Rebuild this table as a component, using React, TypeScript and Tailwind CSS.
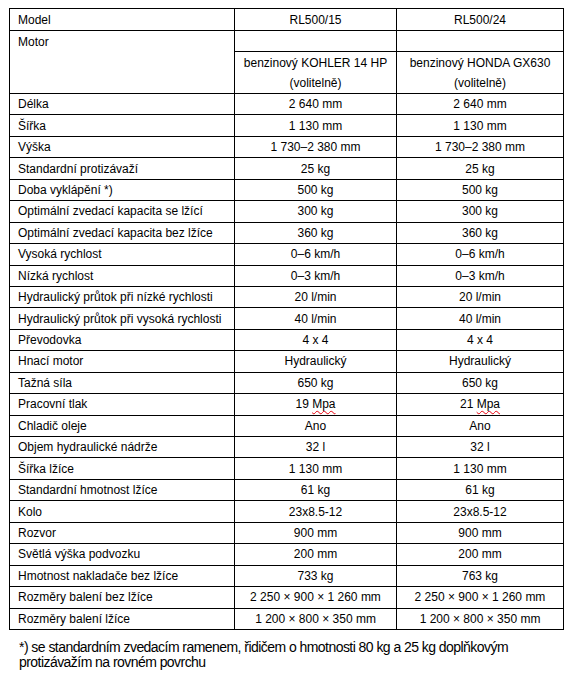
import React from "react";

type Row = [string, React.ReactNode, React.ReactNode];

const Mpa = () => (
  <span className="underline decoration-wavy decoration-red-600 decoration-1 underline-offset-2">Mpa</span>
);

const rows: Row[] = [
  ["Délka", "2 640 mm", "2 640 mm"],
  ["Šířka", "1 130 mm", "1 130 mm"],
  ["Výška", "1 730–2 380 mm", "1 730–2 380 mm"],
  ["Standardní protizávaží", "25 kg", "25 kg"],
  ["Doba vyklápění *)", "500 kg", "500 kg"],
  ["Optimální zvedací kapacita se lžící", "300 kg", "300 kg"],
  ["Optimální zvedací kapacita bez lžíce", "360 kg", "360 kg"],
  ["Vysoká rychlost", "0–6 km/h", "0–6 km/h"],
  ["Nízká rychlost", "0–3 km/h", "0–3 km/h"],
  ["Hydraulický průtok při nízké rychlosti", "20 l/min", "20 l/min"],
  ["Hydraulický průtok při vysoká rychlosti", "40 l/min", "40 l/min"],
  ["Převodovka", "4 x 4", "4 x 4"],
  ["Hnací motor", "Hydraulický", "Hydraulický"],
  ["Tažná síla", "650 kg", "650 kg"],
  ["Pracovní tlak", <>19 <Mpa /></>, <>21 <Mpa /></>],
  ["Chladič oleje", "Ano", "Ano"],
  ["Objem hydraulické nádrže", "32 l", "32 l"],
  ["Šířka lžíce", "1 130 mm", "1 130 mm"],
  ["Standardní hmotnost lžíce", "61 kg", "61 kg"],
  ["Kolo", "23x8.5-12", "23x8.5-12"],
  ["Rozvor", "900 mm", "900 mm"],
  ["Světlá výška podvozku", "200 mm", "200 mm"],
  ["Hmotnost nakladače bez lžíce", "733 kg", "763 kg"],
  ["Rozměry balení bez lžíce", "2 250 × 900 × 1 260 mm", "2 250 × 900 × 1 260 mm"],
  ["Rozměry balení lžíce", "1 200 × 800 × 350 mm", "1 200 × 800 × 350 mm"],
];

export default function App() {
  return (
    <div
      className="w-[575px] h-[678px] bg-white text-black"
      style={{ fontFamily: '"Liberation Sans", Arial, sans-serif' }}
    >
      <div className="pt-[8px] pl-[9px]">
        <table className="border-collapse table-fixed w-[554px] text-[12px] leading-[20px]">
          <colgroup>
            <col className="w-[225px]" />
            <col className="w-[162px]" />
            <col className="w-[167px]" />
          </colgroup>
          <tbody>
            <tr className="h-[22px]">
              <td className="border border-black pl-[8px] py-0 align-middle">Model</td>
              <td className="border border-black text-center py-0 align-middle">RL500/15</td>
              <td className="border border-black text-center py-0 align-middle">RL500/24</td>
            </tr>
            <tr className="h-[21px]">
              <td rowSpan={2} className="border border-black pl-[8px] pt-[1px] align-top">Motor</td>
              <td className="border border-black"></td>
              <td className="border border-black"></td>
            </tr>
            <tr className="h-[42px]">
              <td className="border border-black text-center align-middle">
                benzinový KOHLER 14 HP
                <br />
                (volitelně)
              </td>
              <td className="border border-black text-center align-middle">
                benzinový HONDA GX630
                <br />
                (volitelně)
              </td>
            </tr>
            {rows.map(([a, b, c], i) => (
              <tr key={i} className="h-[21.44px]">
                <td className="border border-black pl-[8px] py-0 align-middle whitespace-nowrap">{a}</td>
                <td className="border border-black text-center py-0 align-middle whitespace-nowrap">{b}</td>
                <td className="border border-black text-center py-0 align-middle whitespace-nowrap">{c}</td>
              </tr>
            ))}
          </tbody>
        </table>
      </div>
      <p className="pl-[19px] pr-[50px] mt-[10px] text-[14px] leading-[15px] tracking-[-0.55px]">
        *) se standardním zvedacím ramenem, řidičem o hmotnosti 80 kg a 25 kg doplňkovým protizávažím na rovném povrchu
      </p>
    </div>
  );
}
